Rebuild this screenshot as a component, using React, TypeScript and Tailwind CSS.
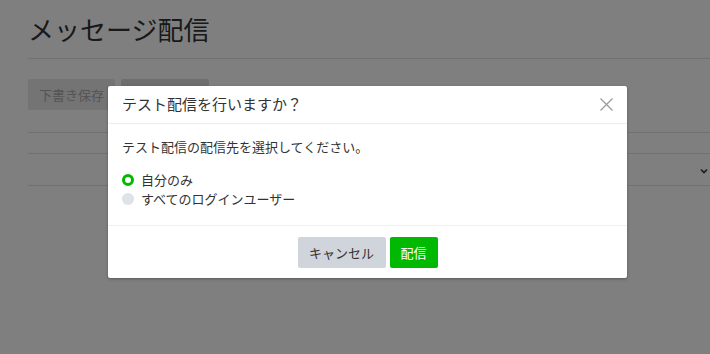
import { useState } from "react";

// モーダルの送信先
const targets = [
  { id: "self", label: "自分のみ" },
  { id: "all", label: "すべてのログインユーザー" },
];

function Radio({ checked }: { checked: boolean }) {
  return checked ? (
    <span className="block w-[12px] h-[12px] rounded-full border-[3px] border-[#00b900] bg-white" />
  ) : (
    <span className="block w-[12px] h-[12px] rounded-full bg-[#dfe2e7]" />
  );
}

export default function App() {
  const [target, setTarget] = useState("self");

  return (
    <div
      className="relative w-[710px] h-[354px] overflow-hidden bg-white text-[#333]"
      style={{ fontFamily: '"Noto Sans CJK JP", "Noto Sans", sans-serif' }}
    >
      {/* 背景のページ */}
      <div className="pl-[28px] pt-[11px]">
        <h1 className="text-[26px] leading-[36px] text-[#333]">
          メッセージ配信
        </h1>
        <div className="mt-[11px] border-t border-[#e2e2e2]" />

        <div className="mt-[20px] flex gap-[6px]">
          <button className="w-[87px] h-[31px] bg-[#e8e8e8] text-[13px] text-[#aaa] rounded-[2px]">
            下書き保存
          </button>
          {/* モーダルに隠れているボタン */}
          <div className="w-[88px] h-[31px] bg-[#dcdcdc] rounded-[2px]" />
        </div>

        <div className="mt-[22px] border-t border-[#e2e2e2]" />
        <div className="mt-[20px] h-[33px] border-y border-[#e2e2e2] flex items-center justify-end pr-[2px]">
          <svg width="8" height="6" viewBox="0 0 8 6" className="mt-[2px]">
            <path d="M1 1.5 L4 4.5 L7 1.5" stroke="#333" strokeWidth="1.6" fill="none" />
          </svg>
        </div>

        <div className="mt-[40px] ml-[192px] flex gap-[8px]">
          <div className="w-[148px] h-[48px] border border-[#e4e4e4] rounded-[2px]" />
          <div className="w-[148px] h-[48px] border border-[#e4e4e4] rounded-[2px]" />
        </div>
      </div>

      {/* オーバーレイ + モーダル */}
      <div className="absolute inset-0 bg-black/50 pt-[86px] pl-[108px]">
        <div className="w-[519px] bg-white rounded-[2px] shadow-[0_1px_3px_rgba(0,0,0,0.3)]">
          <div className="h-[38px] flex items-center justify-between pl-[14px] pr-[14px] border-b border-[#ececec]">
            <h2 className="text-[15px] text-[#333]">テスト配信を行いますか？</h2>
            <button className="w-[14px] h-[14px] flex items-center justify-center">
              <svg width="13" height="13" viewBox="0 0 13 13">
                <path d="M0.5 0.5 L12.5 12.5 M12.5 0.5 L0.5 12.5" stroke="#999" strokeWidth="1.2" />
              </svg>
            </button>
          </div>

          <div className="pl-[14px] pt-[14px] pb-[17px] border-b border-[#f0f0f0]">
            <p className="text-[13px] leading-[18px]">
              テスト配信の配信先を選択してください。
            </p>
            <div className="mt-[14px] flex flex-col">
              {targets.map((t) => (
                <label
                  key={t.id}
                  onClick={() => setTarget(t.id)}
                  className="flex items-center gap-[7px] h-[19px] text-[13px] cursor-pointer"
                >
                  <Radio checked={target === t.id} />
                  {t.label}
                </label>
              ))}
            </div>
          </div>

          <div className="flex justify-center gap-[4px] pt-[11px] pb-[10px]">
            <button className="w-[88px] h-[31px] bg-[#d0d4db] text-[#333] text-[13px] rounded-[2px]">
              キャンセル
            </button>
            <button className="w-[48px] h-[31px] bg-[#00b900] text-white text-[13px] rounded-[2px]">
              配信
            </button>
          </div>
        </div>
      </div>
    </div>
  );
}
